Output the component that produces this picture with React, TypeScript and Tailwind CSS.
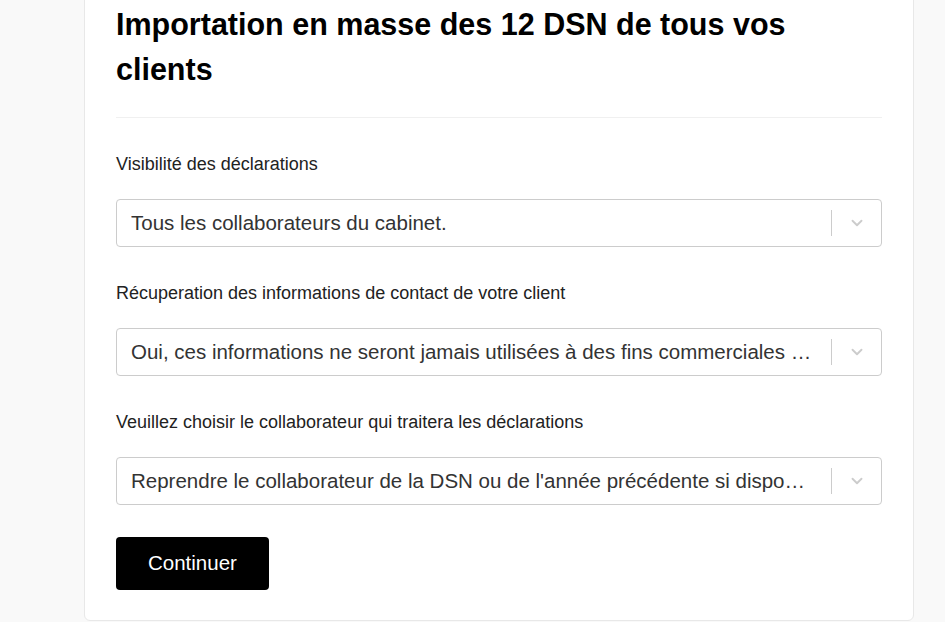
import { ChevronDown } from 'lucide-react';

interface SelectProps {
  label: string;
  value: string;
}

const fakeSelect = ({ label, value }: SelectProps) => (
  <div key={label}>
    <p className="text-[18px] leading-[26px] text-[#222]">{label}</p>
    <div className="mt-[22px] h-[48px] flex items-center rounded-[4px] border border-[#cccccc] bg-white">
      <div className="flex-1 min-w-0 pl-[14px] pr-[16px]">
        <div className="truncate text-[20.5px] text-[#333]">{value}</div>
      </div>
      <span className="w-px h-[26px] bg-[#cccccc]" />
      <div className="w-[49px] flex items-center justify-center text-[#cccccc]">
        <ChevronDown size={18} strokeWidth={2.5} />
      </div>
    </div>
  </div>
);

export default function App() {
  const fields: SelectProps[] = [
    { label: 'Visibilité des déclarations', value: 'Tous les collaborateurs du cabinet.' },
    {
      label: 'Récuperation des informations de contact de votre client',
      value: 'Oui, ces informations ne seront jamais utilisées à des fins commerciales et ne seront pas partagées',
    },
    {
      label: 'Veuillez choisir le collaborateur qui traitera les déclarations',
      value: "Reprendre le collaborateur de la DSN ou de l'année précédente si disponible, sinon moi-même",
    },
  ];

  return (
    <div className="h-[622px] overflow-hidden bg-[#f9f9f9]" style={{ fontFamily: '"Liberation Sans", Arial, sans-serif' }}>
      <div className="ml-[84px] w-[830px] -mt-[30px] bg-white border border-[#e8e8e8] rounded-[6px] px-[31px] pt-[31px] pb-[30px]">
        <h1 className="text-[30.5px] leading-[45px] font-bold text-black">
          Importation en masse des 12 DSN de tous vos clients
        </h1>
        <div className="mt-[25px] h-px bg-[#f0f0f0]" />
        <div className="mt-[33px] flex flex-col gap-[33px]">
          {fields.map((f) => fakeSelect(f))}
        </div>
        <button className="mt-[32px] h-[53px] px-[32px] rounded-[4px] bg-black text-white text-[20.5px]">
          Continuer
        </button>
      </div>
    </div>
  );
}
